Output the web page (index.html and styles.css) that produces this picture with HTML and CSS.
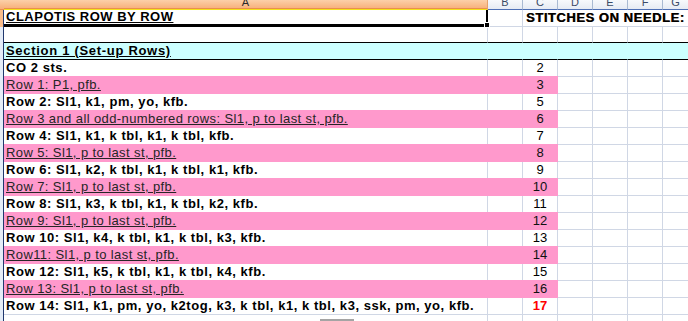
FILE: index.html
```html
<!DOCTYPE html>
<html>
<head>
<meta charset="utf-8">
<link rel="stylesheet" href="styles.css">
</head>
<body>
<div class="sheet">
  <div class="row hdr">
    <div class="rh rh-sel"></div>
    <div class="ch ch-sel">A</div>
    <div class="ch">B</div>
    <div class="ch">C</div>
    <div class="ch">D</div>
    <div class="ch">E</div>
    <div class="ch">F</div>
    <div class="ch ch-last">G</div>
  </div>

  <div class="row r-title">
    <div class="rh rh-sel"></div>
    <div class="cell a a-title"><span class="u b title">CLAPOTIS ROW BY ROW</span><span class="handle"></span></div>
    <div class="cell"></div>
    <div class="cell span-rest b">STITCHES ON NEEDLE:</div>
  </div>

  <div class="row r-blank">
    <div class="rh"></div>
    <div class="cell a"></div>
    <div class="cell"></div>
    <div class="cell"></div>
    <div class="cell"></div>
    <div class="cell"></div>
    <div class="cell"></div>
    <div class="cell last"></div>
  </div>

  <div class="row r-section">
    <div class="rh"></div>
    <div class="cell a"><span class="u b sec">Section 1 (Set-up Rows)</span></div>
    <div class="cell"></div>
    <div class="cell"></div>
    <div class="cell"></div>
    <div class="cell"></div>
    <div class="cell"></div>
    <div class="cell last"></div>
  </div>

  <div class="row">
    <div class="rh"></div><div class="cell a b">CO 2 sts.</div><div class="cell"></div><div class="cell num">2</div>
    <div class="cell"></div><div class="cell"></div><div class="cell"></div><div class="cell last"></div>
  </div>
  <div class="row pink">
    <div class="rh"></div><div class="cell a"><span class="u">Row 1: P1, pfb.</span></div><div class="cell"></div><div class="cell num">3</div>
    <div class="cell"></div><div class="cell"></div><div class="cell"></div><div class="cell last"></div>
  </div>
  <div class="row">
    <div class="rh"></div><div class="cell a b">Row 2: Sl1, k1, pm, yo, kfb.</div><div class="cell"></div><div class="cell num">5</div>
    <div class="cell"></div><div class="cell"></div><div class="cell"></div><div class="cell last"></div>
  </div>
  <div class="row pink">
    <div class="rh"></div><div class="cell a"><span class="u">Row 3 and all odd-numbered rows: Sl1, p to last st, pfb.</span></div><div class="cell"></div><div class="cell num">6</div>
    <div class="cell"></div><div class="cell"></div><div class="cell"></div><div class="cell last"></div>
  </div>
  <div class="row">
    <div class="rh"></div><div class="cell a b">Row 4: Sl1, k1, k tbl, k1, k tbl, kfb.</div><div class="cell"></div><div class="cell num">7</div>
    <div class="cell"></div><div class="cell"></div><div class="cell"></div><div class="cell last"></div>
  </div>
  <div class="row pink">
    <div class="rh"></div><div class="cell a"><span class="u">Row 5: Sl1, p to last st, pfb.</span></div><div class="cell"></div><div class="cell num">8</div>
    <div class="cell"></div><div class="cell"></div><div class="cell"></div><div class="cell last"></div>
  </div>
  <div class="row">
    <div class="rh"></div><div class="cell a b">Row 6: Sl1, k2, k tbl, k1, k tbl, k1, kfb.</div><div class="cell"></div><div class="cell num">9</div>
    <div class="cell"></div><div class="cell"></div><div class="cell"></div><div class="cell last"></div>
  </div>
  <div class="row pink">
    <div class="rh"></div><div class="cell a"><span class="u">Row 7: Sl1, p to last st, pfb.</span></div><div class="cell"></div><div class="cell num">10</div>
    <div class="cell"></div><div class="cell"></div><div class="cell"></div><div class="cell last"></div>
  </div>
  <div class="row">
    <div class="rh"></div><div class="cell a b">Row 8: Sl1, k3, k tbl, k1, k tbl, k2, kfb.</div><div class="cell"></div><div class="cell num">11</div>
    <div class="cell"></div><div class="cell"></div><div class="cell"></div><div class="cell last"></div>
  </div>
  <div class="row pink">
    <div class="rh"></div><div class="cell a"><span class="u">Row 9: Sl1, p to last st, pfb.</span></div><div class="cell"></div><div class="cell num">12</div>
    <div class="cell"></div><div class="cell"></div><div class="cell"></div><div class="cell last"></div>
  </div>
  <div class="row">
    <div class="rh"></div><div class="cell a b">Row 10: Sl1, k4, k tbl, k1, k tbl, k3, kfb.</div><div class="cell"></div><div class="cell num">13</div>
    <div class="cell"></div><div class="cell"></div><div class="cell"></div><div class="cell last"></div>
  </div>
  <div class="row pink">
    <div class="rh"></div><div class="cell a"><span class="u">Row11: Sl1, p to last st, pfb.</span></div><div class="cell"></div><div class="cell num">14</div>
    <div class="cell"></div><div class="cell"></div><div class="cell"></div><div class="cell last"></div>
  </div>
  <div class="row">
    <div class="rh"></div><div class="cell a b">Row 12: Sl1, k5, k tbl, k1, k tbl, k4, kfb.</div><div class="cell"></div><div class="cell num">15</div>
    <div class="cell"></div><div class="cell"></div><div class="cell"></div><div class="cell last"></div>
  </div>
  <div class="row pink">
    <div class="rh"></div><div class="cell a"><span class="u">Row 13: Sl1, p to last st, pfb.</span></div><div class="cell"></div><div class="cell num">16</div>
    <div class="cell"></div><div class="cell"></div><div class="cell"></div><div class="cell last"></div>
  </div>
  <div class="row">
    <div class="rh"></div><div class="cell a b">Row 14: Sl1, k1, pm, yo, k2tog, k3, k tbl, k1, k tbl, k3, ssk, pm, yo, kfb.</div><div class="cell"></div><div class="cell num b red">17</div>
    <div class="cell"></div><div class="cell"></div><div class="cell"></div><div class="cell last"></div>
  </div>
  <div class="row">
    <div class="rh"></div><div class="cell a"><span class="thumb"></span></div><div class="cell"></div><div class="cell"></div>
    <div class="cell"></div><div class="cell"></div><div class="cell"></div><div class="cell last"></div>
  </div>
</div>
</body>
</html>
```

FILE: styles.css
```css
html, body {
  margin: 0;
  padding: 0;
  background: #ffffff;
}
body {
  width: 688px;
  height: 321px;
  overflow: hidden;
  font-family: "Liberation Sans", Arial, sans-serif;
  font-size: 13px;
  color: #000;
}
.sheet {
  display: flex;
  flex-direction: column;
  width: 688px;
}
.row {
  display: grid;
  grid-template-columns: 4px 484px 35px 35px 35px 35px 35px 25px;
  height: 17px;
  flex: none;
}
.rh {
  box-sizing: border-box;
  background: #e4ecf7;
  border-right: 1px solid #20386e;
}
.rh-sel {
  background: #f9bb8a;
}
.hdr {
  height: 10px;
}
.hdr .rh {
  background: linear-gradient(#fcd0a8, #f7ae78);
  border-right: none;
  border-bottom: 1px solid #e8904e;
}
.ch {
  box-sizing: border-box;
  height: 10px;
  overflow: hidden;
  display: flex;
  align-items: flex-end;
  justify-content: center;
  padding-bottom: 1px;
  font-size: 11px;
  line-height: 11px;
  color: #3b4a66;
  background: linear-gradient(#f7f9fc, #e6ebf3);
  border-right: 1px solid #a9bad2;
  border-bottom: 1px solid #4e70b6;
}
.ch-sel {
  color: #2a2a2a;
  background: linear-gradient(#fcd0a8, #f7ae78);
  border-right: 1px solid #e5a06a;
  border-bottom: 1px solid #f5e21a;
  box-shadow: inset 0 -1px 0 #e8904e;
}
.ch-last {
  border-right: none;
}
.cell {
  box-sizing: border-box;
  border-right: 1px solid #d0d7e5;
  border-bottom: 1px solid #d0d7e5;
  line-height: 16px;
  white-space: nowrap;
  overflow: visible;
  padding-left: 2px;
  letter-spacing: 0.4px;
}
.cell.b {
  letter-spacing: 0.55px;
}
.cell.last {
  border-right: none;
}
.b { font-weight: bold; }
.u { text-decoration: underline; text-underline-offset: 1px; }
.title { letter-spacing: 0.5px; }
.sec { letter-spacing: 0.7px; }
.num {
  text-align: center;
  padding-left: 0;
  letter-spacing: 0;
}
.cell.num.b { letter-spacing: 0; }
.red { color: #ff0000; }

.r-title .a-title {
  position: relative;
  border-bottom: 3px solid #000;
  border-right: 2px solid #000;
  line-height: 14px;
}
.handle {
  position: absolute;
  right: -4px;
  bottom: -4px;
  width: 6px;
  height: 6px;
  background: #000;
  border: 1px solid #fff;
  box-sizing: border-box;
}
.span-rest {
  grid-column: 4 / 9;
  border-right: none;
  padding-left: 3px;
  letter-spacing: 0.2px;
  text-shadow: 0.5px 0 0 #5a3a10;
}
.r-blank {
  height: 16px;
}
.r-blank .cell {
  border-bottom: 1px solid #000;
}
.r-section .cell {
  background: #ccffff;
  border-right-color: #ccffff;
  border-bottom: 1px solid #000;
}
.r-section .cell.last { border-right: none; }

.pink .a,
.pink .cell:nth-child(3),
.pink .cell:nth-child(4) {
  background: #ff99cc;
  border-right-color: #ff99cc;
  border-bottom-color: #ff99cc;
  box-shadow: 0 -1px 0 #ff99cc;
}
.pink .a { color: #262626; }
.pink .num { color: #111; }

.thumb {
  display: inline-block;
  margin-left: 314px;
  margin-top: 4px;
  width: 34px;
  height: 3px;
  background: #a4a4a4;
  vertical-align: top;
}
```
